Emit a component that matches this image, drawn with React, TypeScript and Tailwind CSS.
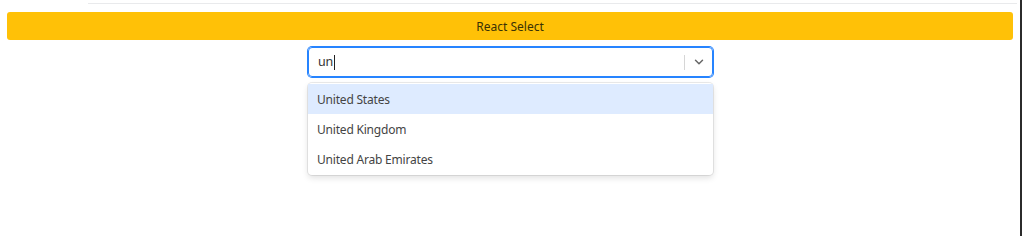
import { ChevronDown } from 'lucide-react'

const options = ['United States', 'United Kingdom', 'United Arab Emirates']

export default function App() {
  return (
    <div className="flex h-[236px] w-[1024px] bg-white font-['Noto_Sans',sans-serif]">
      <div className="w-[1020px]">
        {/* faint top rule */}
        <div className="ml-[88px] mr-[3px] mt-[3px] h-px bg-[#e9eaec]" />

        {/* Header bar */}
        <div className="mx-[7px] mt-[8px] flex h-[28px] items-center justify-center rounded-[3px] bg-[#ffc107] pt-px text-[12px] text-[#3a3206]">
          React Select
        </div>

        {/* Select */}
        <div className="ml-[308px] mt-[7px] w-[405px]">
          <div className="flex h-[30px] items-center rounded-[4px] border border-[#2684ff] pl-[9px] shadow-[0_0_0_1px_#2684ff]">
            <div className="flex flex-1 items-center text-[12.5px] tracking-[-0.2px] text-[#333]">
              un
              <span className="ml-px inline-block h-[15px] w-px bg-[#222]" />
            </div>
            <span className="h-[15px] w-px bg-[#d6d6d6]" />
            <div className="flex w-[27px] items-center justify-center text-[#666]">
              <ChevronDown className="h-[14px] w-[14px]" strokeWidth={2.5} />
            </div>
          </div>

          {/* Menu */}
          <div className="mt-[6px] rounded-[4px] bg-white py-px shadow-[0_0_0_1px_rgba(0,0,0,0.08),0_3px_6px_rgba(0,0,0,0.12)]">
            {options.map((o, i) => (
              <div
                key={o}
                className={`flex h-[30px] items-center px-[9px] pt-px text-[12px] tracking-[-0.2px] text-[#444] ${i === 0 ? 'bg-[#deebff]' : ''}`}
              >
                {o}
              </div>
            ))}
          </div>
        </div>
      </div>
      <div className="w-[2px] bg-[#2b2b2b]" />
      <div className="w-[2px] bg-white" />
    </div>
  )
}
